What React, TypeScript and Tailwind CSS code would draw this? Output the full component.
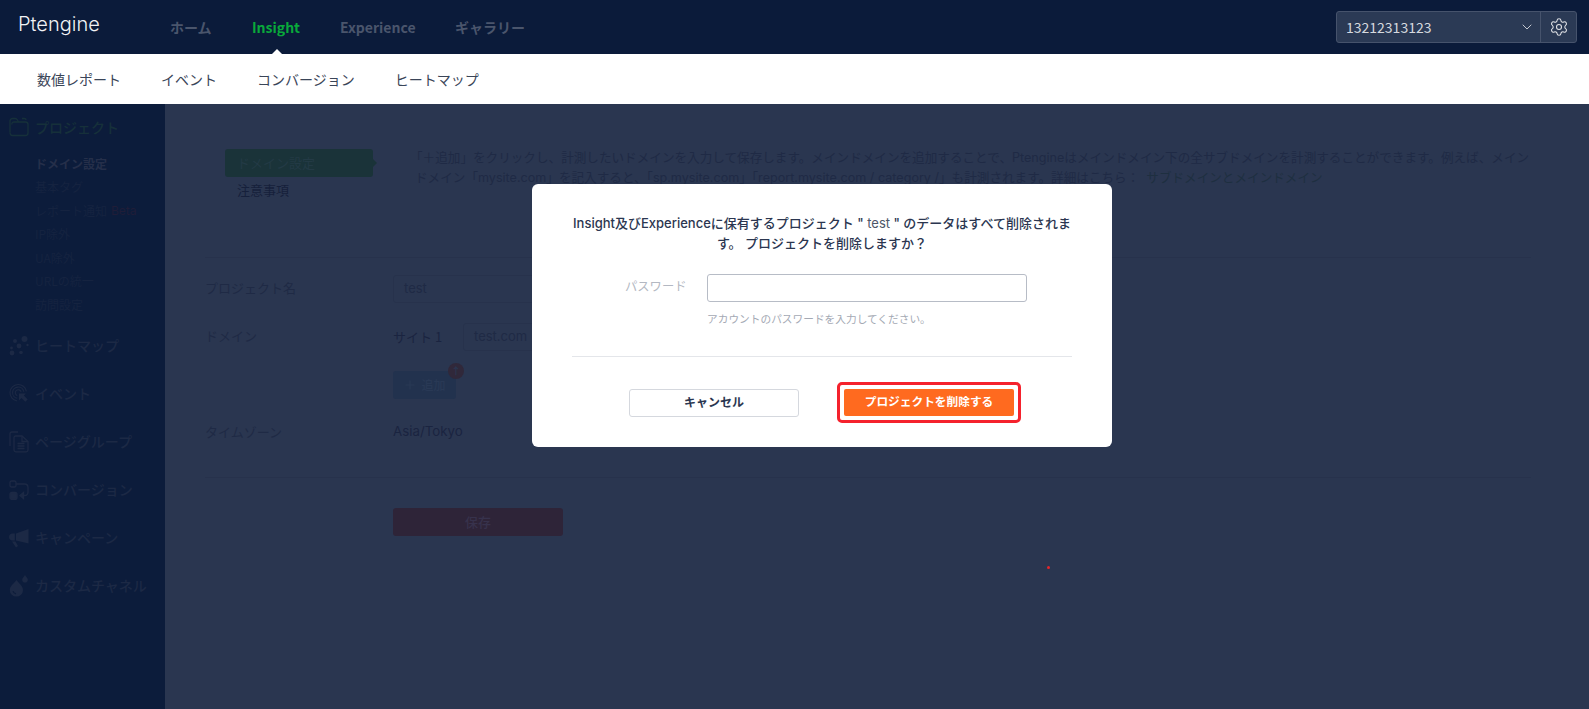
import { ChevronDown, Plus, Settings } from "lucide-react";

const jp = "font-['Noto_Sans_CJK_JP','Noto_Sans',sans-serif]";
const inter = "font-['Inter','Noto_Sans_CJK_JP',sans-serif]";

const subItems = ["基本タグ", "IP除外", "UA除外", "URLの統一", "訪問設定"];

function FolderIcon() {
  return (
    <svg width="20" height="20" viewBox="0 0 20 20" fill="none" stroke="#16303a" strokeWidth="1.3">
      <path d="M1 15.500V4C1 2.500 2 1.500 3.500 1.500h2.800c1 0 1.500.5 2 1.300L9.500 5" />
      <path d="M1 15.500C1 17.500 2 18.500 3.500 18.500h13c1.500 0 2.500-1 2.500-2.500V7.500C19 6 18 5 16.500 5H5C3.500 5 2.800 6 2.800 7.500" />
      <path d="M13 1.500h2.500c1 0 1.500.8 1.500 1.500" />
    </svg>
  );
}

function HeatIcon() {
  return (
    <svg width="20" height="20" viewBox="0 0 20 20" fill="#1c2945">
      <circle cx="15.500" cy="3" r="3" />
      <circle cx="6" cy="5" r="2" />
      <circle cx="10" cy="10" r="2.400" />
      <circle cx="2.500" cy="12" r="1.400" />
      <circle cx="18.500" cy="9" r="1.200" />
      <circle cx="3" cy="17" r="2.400" />
      <circle cx="12" cy="16.500" r="1.800" />
    </svg>
  );
}

function EventIcon() {
  return (
    <svg width="23" height="23" viewBox="0 0 23 23" fill="none" stroke="#1c2945" strokeWidth="1.300">
      <path d="M20 9A9.500 9.500 0 1 0 9 20" />
      <path d="M17 9.500A6.500 6.500 0 1 0 9.500 17" />
      <path d="M14 9.500A3.500 3.500 0 1 0 9.500 14" />
      <path d="M11.500 11.500h8l-2.400 2.400 4.400 4.400-2.800 2.800-4.400-4.400-2.800 2.800Z" fill="#1c2945" stroke="none" />
    </svg>
  );
}

function PagesIcon() {
  return (
    <svg width="20" height="22" viewBox="0 0 20 22" fill="none" stroke="#1c2945" strokeWidth="1.300">
      <path d="M1 15V3c0-1.200.8-2 2-2h6" />
      <path d="M5 6.500c0-1 .7-1.500 1.500-1.500H13l6 5.500V19c0 1-.8 1.800-1.800 1.800H6.800C5.800 20.800 5 20 5 19Z" />
      <path d="M13 5v5.500h6M8.500 12.500h7M8.500 15h7M8.500 17.500h7" />
    </svg>
  );
}

function ConvIcon() {
  return (
    <svg width="20" height="20" viewBox="0 0 20 20" fill="none" stroke="#1c2945" strokeWidth="1.300">
      <rect x="1" y="1" width="6" height="6" rx="1.500" />
      <rect x="1" y="12.500" width="7" height="7" rx="2" fill="#1c2945" />
      <path d="M7 4h8.500c2 0 3.500 1.500 3.500 3.500V12c0 2-1.500 3.500-3.500 3.500H12" />
      <path d="M14.500 12.500 11 15.500l3.500 3Z" fill="#1c2945" />
    </svg>
  );
}

function MegaphoneIcon() {
  return (
    <svg width="20" height="20" viewBox="0 0 20 20" fill="#1c2945">
      <path d="M7 5.500 19.500 1v14.500L7 12.500Z" />
      <path d="M5.800 5.500V12.500H3.500C1.500 12.500 0 11 0 9s1.500-3.500 3.500-3.500Z" />
      <path d="M3 13.500h3.500l2.500 4.500-2 1.500Z" />
    </svg>
  );
}

function DropIcon() {
  return (
    <svg width="20" height="22" viewBox="0 0 20 22" fill="#1c2945">
      <path d="M7.500 5C10 8.500 14 11 14 15a6.600 6.600 0 0 1-13.200 0C.8 11 5 8.500 7.500 5Z" />
      <path d="M16 0c1 1.800 2.800 3 2.800 4.800a2.800 2.800 0 0 1-5.600 0C13.200 3 15 1.800 16 0Z" />
      <path d="M4 16c.3 1.500 1.500 2.600 3 2.800" fill="none" stroke="#0d1d3b" strokeWidth="1.200" />
    </svg>
  );
}

const sections = [
  { label: "ヒートマップ", icon: <HeatIcon /> },
  { label: "イベント", icon: <EventIcon /> },
  { label: "ページグループ", icon: <PagesIcon /> },
  { label: "コンバージョン", icon: <ConvIcon /> },
  { label: "キャンペーン", icon: <MegaphoneIcon /> },
  { label: "カスタムチャネル", icon: <DropIcon /> },
];

function Sidebar() {
  return (
    <aside className="w-[165px] shrink-0 bg-[#0c1c3b] pt-[11px] pl-[9px]">
      <div className="flex h-[24px] items-center gap-[6px] text-[14px] font-medium text-[#16303a]">
        <span className="flex w-[20px] justify-center"><FolderIcon /></span>
        プロジェクト
      </div>
      <div className="mt-[13px] flex flex-col pl-[26px] text-[12px] text-[#152340]">
        <div className="flex h-[23.500px] items-center font-bold text-[#252f4a]">ドメイン設定</div>
        <div className="flex h-[23.500px] items-center">基本タグ</div>
        <div className="flex h-[23.500px] items-center">
          レポート通知<span className={`${inter} ml-[4px] text-[#1f1d38]`}>Beta</span>
        </div>
        {subItems.slice(1).map((s) => (
          <div key={s} className="flex h-[23.500px] items-center">{s}</div>
        ))}
      </div>
      <div className="mt-[5px] flex flex-col">
        {sections.map((s) => (
          <div key={s.label} className="flex h-[48px] items-center gap-[6px] text-[14px] font-medium text-[#1c2945]">
            <span className="flex w-[20px] justify-center">{s.icon}</span>
            {s.label}
          </div>
        ))}
      </div>
    </aside>
  );
}

function Settingsform() {
  return (
    <main className="relative flex-1 bg-[#2a3650] pl-[40px] pr-[58px] pt-[45px] text-[13px] text-[#1f2a45]">
      <div className="flex h-[109px] border-b border-[#27324c] pl-[20px]">
        <div className="w-[190px] shrink-0">
          <div className="relative flex h-[28px] w-[148px] items-center rounded-[3px] bg-[#1a3339] pl-[12px] text-[#233a45]">
            ドメイン設定
            <span className="absolute right-[-4px] top-[9px] h-0 w-0 border-y-[5px] border-l-[5px] border-y-transparent border-l-[#1a3339]" />
          </div>
          <div className="mt-[2px] flex h-[22px] items-center pl-[12px] text-[#16203b]">注意事項</div>
        </div>
        <div className={`${inter} -mt-[1px] whitespace-nowrap text-[12.600px] leading-[20px]`}>
          <div className="-ml-[5px]">「＋追加」をクリックし、計測したいドメインを入力して保存します。メインドメインを追加することで、Ptengineはメインドメイン下の全サブドメインを計測することができます。例えば、メイン</div>
          <div>
            ドメイン「mysite.com」を記入すると、「sp.mysite.com」「report.mysite.com / category /」も計測されます。詳細はこちら：
            <span className="ml-[7px] text-[#1e2f40]">サブドメインとメインドメイン</span>
          </div>
        </div>
      </div>

      <div className="mt-[17px] flex h-[28px] items-center">
        <div className="w-[188px] pb-[2px] text-[#1f2a45]">プロジェクト名</div>
        <div className={`${inter} flex h-[28px] w-[320px] items-center rounded-[3px] border border-[#27324c] pl-[10px]`}>test</div>
      </div>
      <div className="mt-[20px] flex h-[28px] items-center">
        <div className="w-[188px] pb-[2px] text-[#1f2a45]">ドメイン</div>
        <div className="w-[70px] text-[#1a2440]">サイト 1</div>
        <div className={`${inter} flex h-[28px] w-[200px] items-center rounded-[3px] border border-[#27324c] pl-[10px]`}>test.com</div>
      </div>
      <div className="mt-[20px] flex h-[28px] pl-[188px]">
        <div className="relative flex h-[28px] w-[63px] items-center justify-center gap-[4px] rounded-[3px] bg-[#22324e] text-[12px] font-medium text-[#293955]">
          <Plus size={14} strokeWidth={2} />
          追加
          <span className="absolute -right-[8px] -top-[8px] flex h-[16px] w-[16px] items-center justify-center rounded-full bg-[#30283a] text-[10px] font-bold leading-none text-[#2a3650]">↑</span>
        </div>
      </div>
      <div className="mt-[20px] flex h-[26px] items-center">
        <div className="w-[188px] text-[#1f2a45]">タイムゾーン</div>
        <div className={`${inter} text-[13.300px] text-[#1a2440]`}>Asia/Tokyo</div>
      </div>
      <div className="mt-[32px] border-t border-[#27324c]" />
      <div className="mt-[30px] flex h-[28px] w-[170px] ml-[188px] items-center justify-center rounded-[3px] bg-[#2e2438] text-[13px] font-medium text-[#37324c]">保存</div>
    </main>
  );
}

function DeleteModal() {
  return (
    <div className={`${inter} w-[580px] rounded-[6px] bg-white px-[40px] pt-[30px] pb-[24px]`}>
      <p className="text-center text-[13px] font-medium leading-[19.500px] text-[#2b3650]">
        Insight及びExperienceに保有するプロジェクト " <span className="font-normal text-[#4d5668]">test</span> " のデータはすべて削除されます。 プロジェクトを削除しますか？
      </p>
      <div className="mt-[21px] flex h-[28px] items-center">
        <label className="w-[135px] pb-[2px] pl-[53px] text-[12.300px] text-[#b3b8c2]">パスワード</label>
        <input type="password" className="h-[28px] w-[320px] rounded-[3px] border border-[#b7bcc6] bg-white outline-none" />
      </div>
      <div className="mt-[10px] pl-[135px] text-[10.700px] leading-[15px] text-[#a4a9b4]">アカウントのパスワードを入力してください。</div>
      <div className="mt-[29px] border-t border-[#e4e6ea]" />
      <div className="mt-[25px] flex items-center pl-[57px]">
        <button className="h-[28px] w-[170px] rounded-[3px] border border-[#d5d8de] bg-white text-[12px] font-semibold text-[#2b3650]">キャンセル</button>
        <div className="ml-[38px] rounded-[5px] border-[3px] border-[#f5222d] p-[4px]">
          <button className="block h-[27px] w-[170px] rounded-[2px] bg-[#ff6a1f] text-[11.700px] font-semibold text-white">プロジェクトを削除する</button>
        </div>
      </div>
    </div>
  );
}

export default function App() {
  return (
    <div className={`${jp} relative flex h-[709px] w-[1589px] flex-col overflow-hidden`}>
      <header className="flex h-[54px] items-center bg-[#0b1b3a] pl-[18px] pr-[12px]">
        <div className={`${inter} mb-[6px] w-[152px] text-[20px] font-light leading-none text-[#f2f3f5]`}>Ptengine</div>
        <nav className="flex items-center text-[14px] font-bold text-[#4a556c]">
          <span className="w-[82px]">ホーム</span>
          <span className="relative w-[88px] text-[#09a93a]">
            Insight
            <span className="absolute left-[20px] top-[32px] h-0 w-0 border-x-[5px] border-b-[5px] border-x-transparent border-b-white" />
          </span>
          <span className="w-[115px]">Experience</span>
          <span>ギャラリー</span>
        </nav>
        <div className="ml-auto flex h-[32px] w-[241px] items-center rounded-[3px] border border-[#46536c] bg-[#2b3a55] text-[14px] text-[#d6d9df]">
          <span className="flex-1 pl-[9px]">13212313123</span>
          <ChevronDown size={16} strokeWidth={1.500} className="mr-[5px] text-[#c5c9d1]" />
          <span className="flex h-full w-[36px] items-center justify-center border-l border-[#46536c]">
            <Settings size={20} strokeWidth={1.300} className="text-[#e0e2e6]" />
          </span>
        </div>
      </header>

      <div className="flex h-[50px] items-center gap-[40px] bg-white pl-[37px] text-[14px] text-[#3a4558]">
        <span>数値レポート</span>
        <span>イベント</span>
        <span>コンバージョン</span>
        <span>ヒートマップ</span>
      </div>

      <div className="flex flex-1">
        <Sidebar />
        <Settingsform />
      </div>

      {/* modal layer */}
      <div className="absolute inset-x-0 bottom-0 top-[104px] pl-[532px] pt-[80px]">
        <DeleteModal />
        <span className="absolute left-[1047px] top-[462px] h-[3px] w-[3px] rounded-full bg-[#e5252a]" />
      </div>
    </div>
  );
}
